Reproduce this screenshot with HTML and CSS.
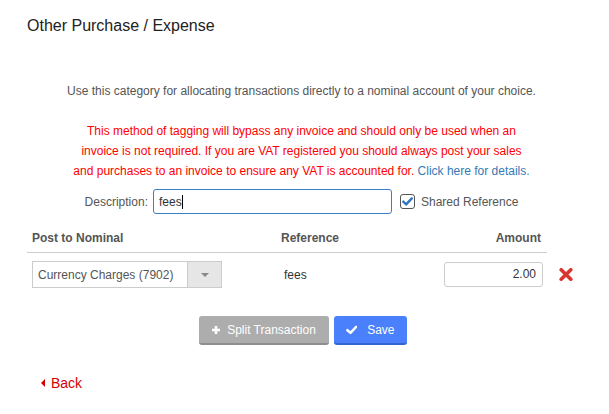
FILE: index.html
```html
<!DOCTYPE html>
<html>
<head>
<meta charset="utf-8">
<link rel="stylesheet" href="styles.css">
</head>
<body>
<div class="page">
  <h1 class="title">Other Purchase / Expense</h1>
  <p class="intro">Use this category for allocating transactions directly to a nominal account of your choice.</p>
  <p class="warning">This method of tagging will bypass any invoice and should only be used when an invoice is not required. If you are VAT registered you should always post your sales and purchases to an invoice to ensure any VAT is accounted for. <a class="link" href="#">Click here for details.</a></p>
  <div class="desc-row">
    <label class="desc-label" for="desc">Description:</label>
    <div class="desc-input"><span>fees</span><span class="caret"></span></div>
    <span class="check">
      <svg width="15" height="15" viewBox="0 0 15 15"><rect x="0.5" y="0.5" width="14" height="14" rx="2.5" fill="#fff" stroke="#555"/><path d="M3.3 7.6 L6.2 10.4 L11.8 4.4" fill="none" stroke="#2f74c0" stroke-width="2.4" stroke-linecap="round" stroke-linejoin="round"/></svg>
    </span>
    <span class="check-label">Shared Reference</span>
  </div>
  <div class="table">
    <div class="thead">
      <div class="th th-nom">Post to Nominal</div>
      <div class="th th-ref">Reference</div>
      <div class="th th-amt">Amount</div>
    </div>
    <div class="trow">
      <div class="td td-nom">
        <div class="select"><span class="select-text">Currency Charges (7902)</span><span class="select-arrow"><span class="tri"></span></span></div>
      </div>
      <div class="td td-ref">fees</div>
      <div class="td td-amt"><div class="amount">2.00</div></div>
      <div class="td td-del">
        <svg width="14" height="13" viewBox="0 0 14 13"><path d="M2.2 1.8 L11.8 11.2 M11.8 1.8 L2.2 11.2" stroke="#d9352f" stroke-width="3.6" stroke-linecap="round"/></svg>
      </div>
    </div>
  </div>
  <div class="actions">
    <button class="btn btn-split"><svg class="plus" width="10" height="10" viewBox="0 0 10 10"><path d="M5 1 V9 M1 5 H9" stroke="#fff" stroke-width="2.6"/></svg>Split Transaction</button>
    <button class="btn btn-save"><svg class="tick" width="12" height="10" viewBox="0 0 12 10"><path d="M1.5 5.2 L4.6 8 L10.5 1.8" fill="none" stroke="#fff" stroke-width="2.6" stroke-linecap="round" stroke-linejoin="round"/></svg>Save</button>
  </div>
  <a class="back" href="#"><span class="back-tri"></span>Back</a>
</div>
</body>
</html>
```

FILE: styles.css
```css
html, body {
  margin: 0;
  padding: 0;
  background: #fff;
}
body {
  font-family: "Liberation Sans", Arial, sans-serif;
  font-size: 12px;
  color: #333;
}
.page {
  width: 549px;
  padding: 16px 0 0 27px;
}
.title {
  margin: 0;
  font-size: 16px;
  font-weight: normal;
  line-height: 20px;
  color: #222;
}
.intro {
  margin: 45px 0 0;
  line-height: 20px;
  text-align: center;
  color: #555;
}
.warning {
  margin: 20px auto 0;
  width: 460px;
  line-height: 20px;
  text-align: center;
  color: #f00;
}
.link {
  color: #337ab7;
  text-decoration: none;
}
.desc-row {
  margin-top: 8px;
  display: flex;
  align-items: center;
  justify-content: center;
  height: 25px;
}
.desc-label {
  color: #555;
  margin-right: 5px;
}
.desc-input {
  width: 232px;
  height: 23px;
  border: 1px solid #3a80c4;
  border-radius: 3px;
  padding-left: 5px;
  display: flex;
  align-items: center;
  color: #333;
}
.caret {
  display: inline-block;
  width: 1px;
  height: 14px;
  background: #000;
}
.check {
  display: flex;
  margin-left: 8px;
}
.check-label {
  margin-left: 6px;
  color: #555;
}
.table {
  margin-top: 14px;
  width: 555px;
}
.thead {
  width: 520px;
  display: flex;
  border-bottom: 1px solid #ccc;
  padding-bottom: 4px;
  line-height: 20px;
  font-weight: bold;
  color: #555;
}
.th-nom {
  width: 244px;
  padding-left: 5px;
}
.th-ref {
  flex: 1;
  padding-left: 5px;
}
.th-amt {
  width: 120px;
  text-align: right;
  padding-right: 6px;
}
.trow {
  display: flex;
  align-items: center;
  margin-top: 8px;
  height: 27px;
}
.td-nom {
  width: 244px;
  padding-left: 5px;
}
.select {
  width: 188px;
  height: 25px;
  border: 1px solid #ccc;
  display: flex;
  align-items: center;
  color: #555;
}
.select-text {
  flex: 1;
  padding-left: 5px;
}
.select-arrow {
  width: 33px;
  height: 25px;
  background: #e6e6e6;
  border-left: 1px solid #ccc;
  display: flex;
  align-items: center;
  justify-content: center;
}
.tri {
  width: 0;
  height: 0;
  border-left: 4px solid transparent;
  border-right: 4px solid transparent;
  border-top: 4px solid #888;
}
.td-ref {
  flex: 1;
  padding-left: 8px;
  color: #333;
}
.td-amt {
  width: 103px;
  display: flex;
  justify-content: flex-end;
  padding-right: 4px;
}
.amount {
  width: 91px;
  height: 23px;
  line-height: 23px;
  border: 1px solid #ccc;
  border-radius: 3px;
  text-align: right;
  padding-right: 6px;
  color: #333;
}
.td-del {
  width: 35px;
  display: flex;
  padding-left: 12px;
  box-sizing: border-box;
}
.actions {
  margin-top: 28px;
  display: flex;
  justify-content: center;
  gap: 5px;
  padding-left: 2px;
}
.btn {
  font-family: "Liberation Sans", Arial, sans-serif;
  font-size: 12px;
  color: #fff;
  border: none;
  border-radius: 3px;
  height: 29px;
  display: flex;
  align-items: center;
  justify-content: center;
  padding: 0 12px;
  border-bottom: 2px solid transparent;
}
.btn-split {
  width: 130px;
  background: #adadad;
  border-bottom-color: #8e8e8e;
}
.plus {
  margin-right: 6px;
}
.btn-save {
  width: 73px;
  background: #4a80fb;
  border-bottom-color: #3464d2;
}
.tick {
  margin-right: 10px;
}
.back {
  margin-top: 28px;
  margin-left: 14px;
  display: inline-flex;
  align-items: center;
  color: #d40000;
  text-decoration: none;
  font-size: 14px;
  line-height: 20px;
}
.back-tri {
  width: 0;
  height: 0;
  border-top: 4px solid transparent;
  border-bottom: 4px solid transparent;
  border-right: 4px solid #d40000;
  margin-right: 6px;
}
```
